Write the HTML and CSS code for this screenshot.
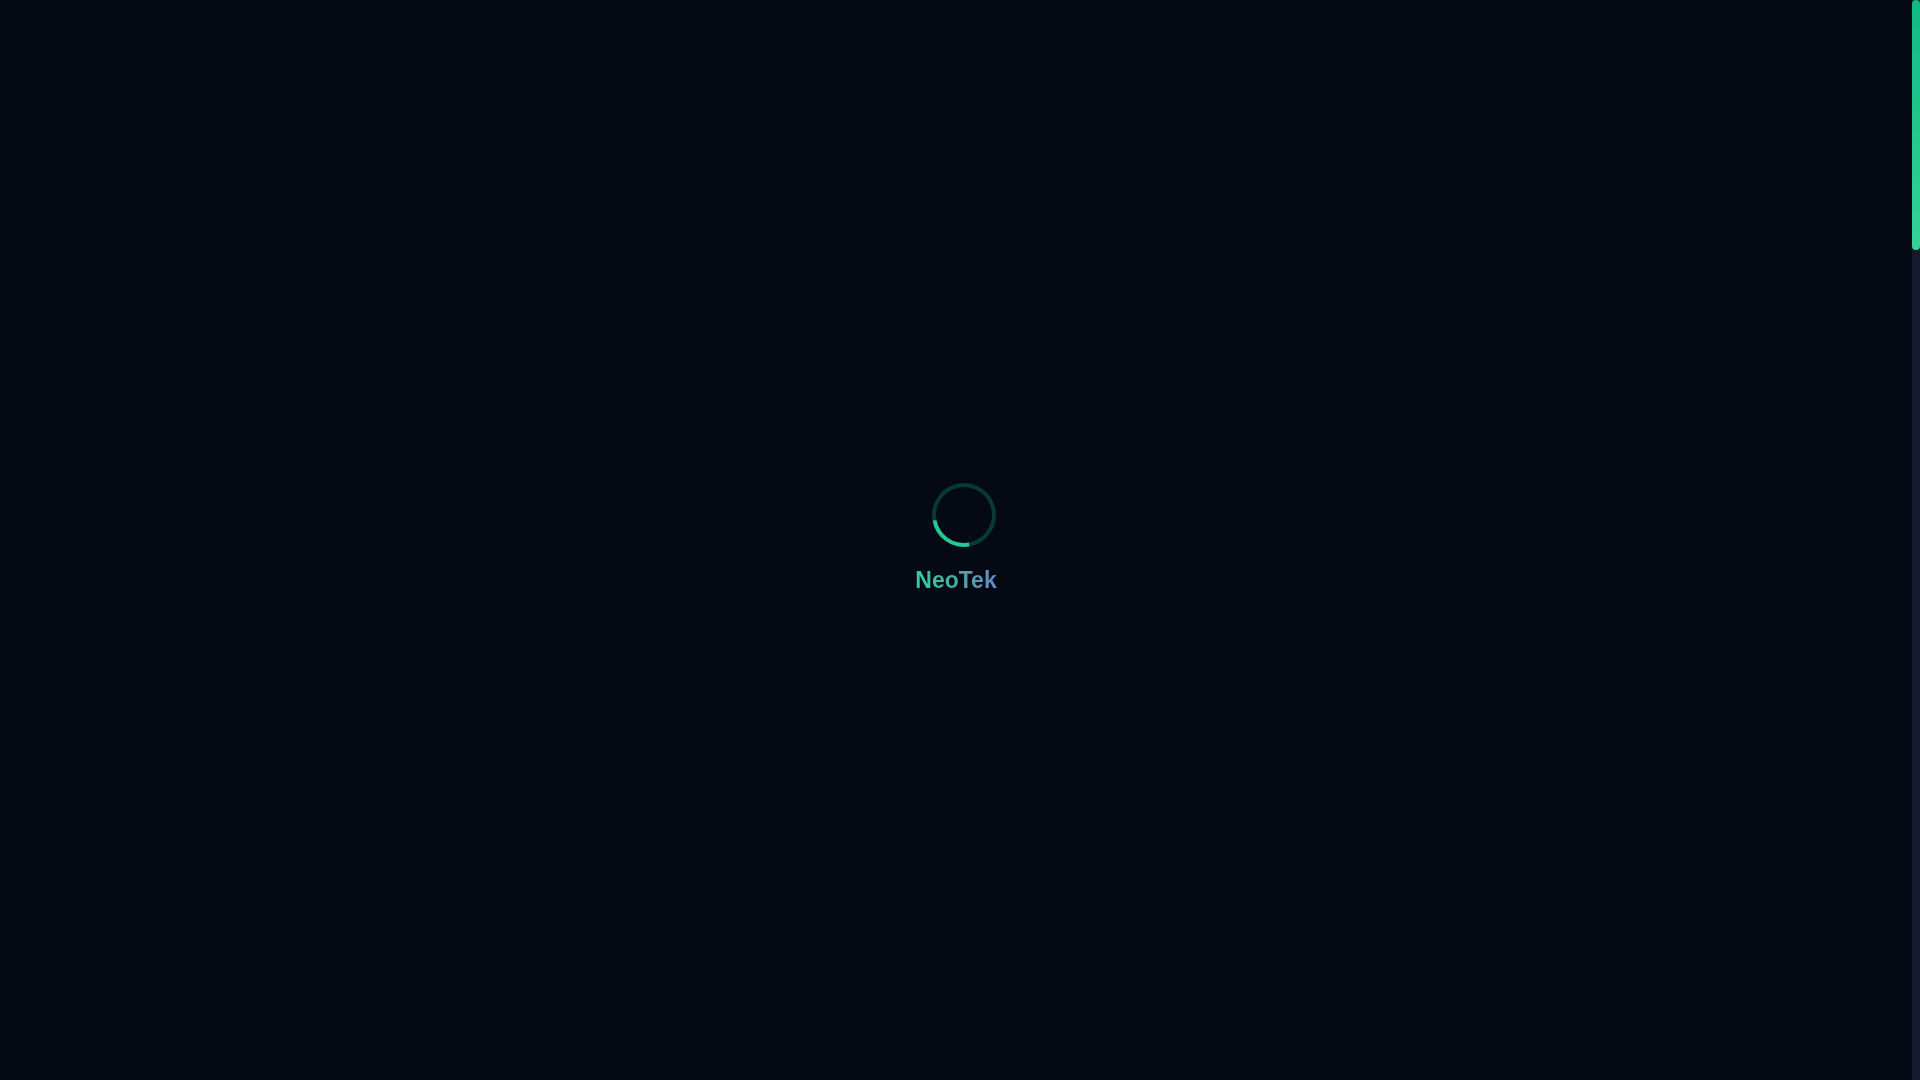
FILE: index.html
```html
<!DOCTYPE html>
<html lang="en">
<head>
<meta charset="utf-8">
<title>NeoTek</title>
<link rel="stylesheet" href="styles.css">
</head>
<body>
<div class="app">
  <div class="stage">
    <div class="loader-inner">
      <div class="spinner"></div>
      <div class="brand">NeoTek</div>
    </div>
  </div>
  <div class="scrollbar">
    <div class="thumb"></div>
  </div>
</div>
</body>
</html>
```
FILE: styles.css
```css
html,
body {
  margin: 0;
  height: 100%;
  overflow: hidden;
  background: #040914;
  font-family: "Liberation Sans", Arial, sans-serif;
}
.app {
  display: flex;
  height: 100%;
}
.stage {
  flex: 1;
  display: flex;
  align-items: center;
  justify-content: center;
  background: #040914;
}
.scrollbar {
  width: 8px;
  background: #131a2e;
  display: flex;
  flex-direction: column;
}
.thumb {
  height: 250px;
  border-radius: 4px;
  background: linear-gradient(180deg, #10b981, #34d399);
}
.loader-inner {
  display: flex;
  flex-direction: column;
  align-items: center;
  gap: 20px;
  transform: translateY(-2px);
}
.spinner {
  width: 56px;
  height: 56px;
  border: 4px solid rgba(16, 185, 129, 0.28);
  border-top-color: #22c993;
  border-radius: 50%;
  transform: rotate(215deg);
  margin-left: 16px;
}
.brand {
  font-size: 23px;
  font-weight: 700;
  line-height: 26px;
  background: linear-gradient(90deg, #2ad39c, #58a0a8 60%, #5a8cd0);
  -webkit-background-clip: text;
  background-clip: text;
  color: transparent;
}
```
